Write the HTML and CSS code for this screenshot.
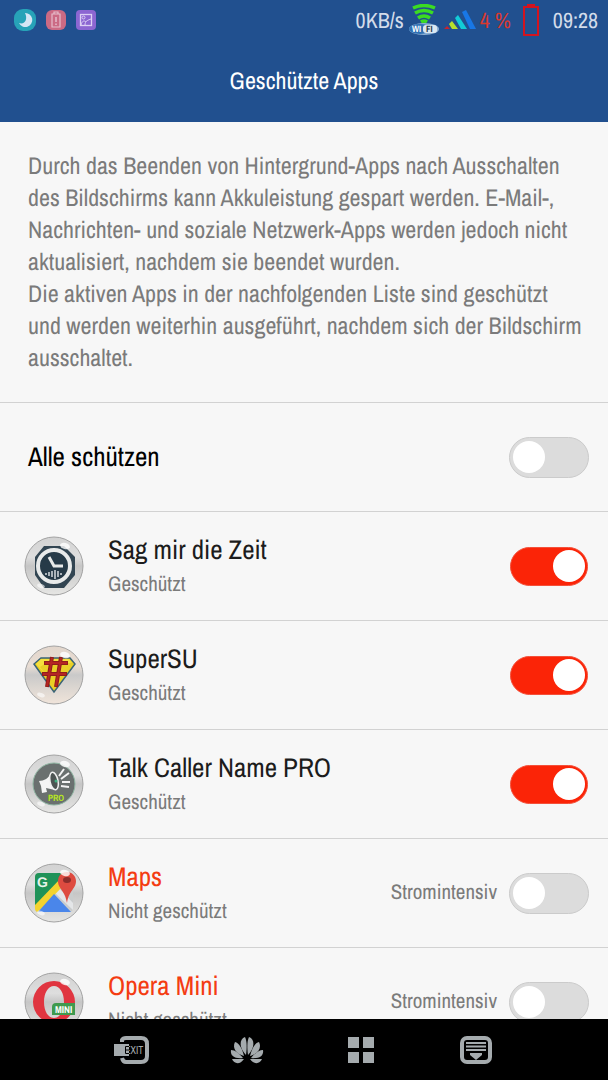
FILE: index.html
```html
<!DOCTYPE html>
<html lang="de">
<head>
    <meta charset="UTF-8">
    <meta name="viewport" content="width=device-width, initial-scale=1.0">
    <title>Geschützte Apps</title>
    <link rel="stylesheet" href="styles.css">
</head>
<body>
    <!-- Shared glass bubble for the app icons -->
    <svg class="defs" width="0" height="0" aria-hidden="true">
        <defs>
            <linearGradient id="glass" x1="0" y1="0" x2="0" y2="1">
                <stop offset="0" stop-color="#d2d2d2"/>
                <stop offset="0.35" stop-color="#dedede"/>
                <stop offset="0.5" stop-color="#c6c6c6"/>
                <stop offset="1" stop-color="#e6e6e4"/>
            </linearGradient>
            <linearGradient id="glass-warm" x1="0" y1="0" x2="0" y2="1">
                <stop offset="0" stop-color="#e2d6cc"/>
                <stop offset="0.35" stop-color="#e8ddd4"/>
                <stop offset="0.5" stop-color="#c9c9c9"/>
                <stop offset="0.7" stop-color="#dad5d0"/>
                <stop offset="1" stop-color="#f0e4da"/>
            </linearGradient>
            <g id="shine">
                <ellipse cx="41" cy="10" rx="5" ry="3" fill="#fff" opacity="0.8" transform="rotate(15 41 10)"/>
                <ellipse cx="17" cy="50" rx="4" ry="2" fill="#fff" opacity="0.6" transform="rotate(20 17 50)"/>
                <circle cx="30" cy="30" r="29" fill="none" stroke="#a3a3a3"/>
            </g>
        </defs>
    </svg>

    <header class="top">
        <div class="status-bar">
            <div class="status-left">
                <svg width="22" height="22" viewBox="0 0 22 22" aria-hidden="true">
                    <rect width="22" height="22" rx="9" fill="#27a3b8"/>
                    <path d="M11 4a7 7 0 1 1-6 10c6 2 9-4 6-10z" fill="#d5e6f5"/>
                </svg>
                <svg width="20" height="20" viewBox="0 0 20 20" aria-hidden="true">
                    <rect width="20" height="20" rx="6" fill="#cb6a84"/>
                    <path d="M8 3.500V2h4v1.500M6 4h8v13H6z" fill="none" stroke="#e6bdcb" stroke-width="1.200"/>
                    <path d="M10 7v5M10 13.500v1.500" stroke="#e6bdcb" stroke-width="1.500"/>
                </svg>
                <svg width="20" height="20" viewBox="0 0 20 20" aria-hidden="true">
                    <rect width="20" height="20" rx="4" fill="#8c66d2"/>
                    <rect x="4.500" y="4.500" width="11" height="11" fill="none" stroke="#dccff5" stroke-width="1.300"/>
                    <circle cx="7.500" cy="7.500" r="1.500" fill="none" stroke="#dccff5"/>
                    <path d="M5 15c1-4 3-5 5-3M9 15c0-4 3-5 6-6" fill="none" stroke="#dccff5"/>
                </svg>
            </div>
            <div class="status-right">
                <span>0KB/s</span>
                <svg width="32" height="32" viewBox="0 0 32 32" aria-hidden="true">
                    <path d="M5 4q11-5 22 0M7 9q9-5 18 0M10 14q6-4 12 0M13 18q3-2 6 0" fill="none" stroke="#3bdc22" stroke-width="3.500"/>
                    <ellipse cx="16" cy="25" rx="15" ry="6" fill="#8fb2d6"/>
                    <ellipse cx="12" cy="25" rx="11" ry="5" fill="#2f70b4"/>
                    <rect x="15" y="21" width="14" height="8" rx="3" fill="#dce8f2"/>
                    <text x="4" y="28" class="wifi-text" fill="#fff">WI</text>
                    <text x="18" y="28" class="wifi-text" fill="#234">FI</text>
                </svg>
                <svg width="32" height="20" viewBox="0 0 32 20" aria-hidden="true">
                    <path d="M0 19l3-3 3 3z" fill="#c8232c"/>
                    <path d="M5 14l3-3 6 8H8z" fill="#b6e02c"/>
                    <path d="M11 8l3-3 9 14h-6z" fill="#12cbd8"/>
                    <path d="M18 2l4-2 10 19h-6z" fill="#1877e6"/>
                </svg>
                <span class="battery-level">4 %</span>
                <svg class="battery" width="16" height="34" viewBox="0 0 16 34" aria-hidden="true">
                    <path d="M1 4h14v28H1zM5 3V2h6v1" fill="none" stroke="#d3141f" stroke-width="2"/>
                </svg>
                <span>09:28</span>
            </div>
        </div>
        <h1>Geschützte Apps</h1>
    </header>

    <main>
        <p class="intro">
            Durch das Beenden von Hintergrund-Apps nach Ausschalten<br>
            des Bildschirms kann Akkuleistung gespart werden. E-Mail-,<br>
            Nachrichten- und soziale Netzwerk-Apps werden jedoch nicht<br>
            aktualisiert, nachdem sie beendet wurden.<br>
            Die aktiven Apps in der nachfolgenden Liste sind geschützt<br>
            und werden weiterhin ausgeführt, nachdem sich der Bildschirm<br>
            ausschaltet.
        </p>

        <div class="row row-all">
            <label class="name" for="all">Alle schützen</label>
            <input class="switch" type="checkbox" id="all">
        </div>

        <div class="row">
            <svg class="app-icon" viewBox="0 0 60 60" aria-hidden="true">
                <circle cx="30" cy="30" r="29" fill="url(#glass)"/>
                <path d="M20 10h20l11 11v18L40 52H20L11 39V21z" fill="#324552"/>
                <circle cx="30" cy="30" r="16" fill="#263a48" stroke="#e8eaea" stroke-width="4"/>
                <path d="M25 21l5 9h9" fill="none" stroke="#e8eaea" stroke-width="3"/>
                <path d="M22 37v2M25 36v4M28 35v6M31 34v9M34 35v6M37 37v2" stroke="#d5dade" stroke-width="1.500"/>
                <use href="#shine"/>
            </svg>
            <label class="info" for="zeit">
                <span class="name">Sag mir die Zeit</span>
                <span class="state">Geschützt</span>
            </label>
            <input class="switch" type="checkbox" id="zeit" checked>
        </div>

        <div class="row">
            <svg class="app-icon" viewBox="0 0 60 60" aria-hidden="true">
                <circle cx="30" cy="30" r="29" fill="url(#glass-warm)"/>
                <path d="M17 13h29l5 6-21 28L10 19z" fill="#e9cf26" stroke="#3b6478" stroke-width="1.500"/>
                <path d="M17 14h28l3 4H22l-6 4 6 8-10-11z" fill="#f6df3c"/>
                <path d="M28 12l-5 30M37 12l-5 30M20 18h24M18 29h25" stroke="#8f1d1c" stroke-width="4"/>
                <path d="M28 13l-5 28M37 13l-5 28M21 18h22M19 29h23" stroke="#b52523" stroke-width="2"/>
                <use href="#shine"/>
            </svg>
            <label class="info" for="supersu">
                <span class="name">SuperSU</span>
                <span class="state">Geschützt</span>
            </label>
            <input class="switch" type="checkbox" id="supersu" checked>
        </div>

        <div class="row">
            <svg class="app-icon" viewBox="0 0 60 60" aria-hidden="true">
                <circle cx="30" cy="30" r="29" fill="url(#glass)"/>
                <circle cx="30" cy="30" r="21" fill="#6a706f" stroke="#8fb5a2"/>
                <path d="M27 19l4 17-9-2 1 4-5 1-1-7-2-5c5 0 10-3 12-8z" fill="#f4f4f4"/>
                <ellipse cx="30" cy="27" rx="4" ry="9" fill="#4d5453" stroke="#f0f0f0" stroke-width="1.500" transform="rotate(-12 30 27)"/>
                <path d="M35 22l5-7M37 25l8-6M38 28h8M37 32l8 1" stroke="#f4f4f4" stroke-width="2"/>
                <circle cx="32" cy="27" r="1.500" fill="#40b080"/>
                <text x="24" y="47" class="pro-text" fill="#b7e81d">PRO</text>
                <use href="#shine"/>
            </svg>
            <label class="info" for="caller">
                <span class="name">Talk Caller Name PRO</span>
                <span class="state">Geschützt</span>
            </label>
            <input class="switch" type="checkbox" id="caller" checked>
        </div>

        <div class="row unprotected">
            <svg class="app-icon" viewBox="0 0 60 60" aria-hidden="true">
                <circle cx="30" cy="30" r="29" fill="url(#glass)"/>
                <rect x="11" y="10" width="38" height="39" rx="4" fill="#c9cccd"/>
                <path d="M15 10h28L11 43V14q0-4 4-4z" fill="#1f9258"/>
                <path d="M34 24l15 16v7L30 29z" fill="#e4e6e8"/>
                <path d="M11 42l27-28 2 8-26 27q-3 0-3-4z" fill="#f3d32f"/>
                <path d="M30 31l17 18H14z" fill="#4a86ea"/>
                <text x="13" y="24" class="g-text" fill="#e6f2ea">G</text>
                <path d="M43 9c-6 0-9 4-9 9 0 8 7 9 9 22 2-13 9-14 9-22 0-5-4-9-9-9z" fill="#de4b40"/>
                <ellipse cx="43" cy="17" rx="4" ry="3" fill="#8c2d2b"/>
                <use href="#shine"/>
            </svg>
            <label class="info" for="maps">
                <span class="name">Maps</span>
                <span class="state">Nicht geschützt</span>
            </label>
            <span class="power">Stromintensiv</span>
            <input class="switch" type="checkbox" id="maps">
        </div>

        <div class="row unprotected">
            <svg class="app-icon" viewBox="0 0 60 60" aria-hidden="true">
                <circle cx="30" cy="30" r="29" fill="url(#glass)"/>
                <path fill-rule="evenodd" d="M30 9a21 21 0 1 1 0 42 21 21 0 0 1 0-42zM30 14c-6 0-10 7-10 16s4 16 10 16 10-7 10-16-4-16-10-16z" fill="#e03540"/>
                <path d="M32 31h19v12H28v-8q0-4 4-4z" fill="#3f9a4e"/>
                <text x="31" y="41" class="mini-text" fill="#fff">MINI</text>
                <use href="#shine"/>
            </svg>
            <label class="info" for="opera">
                <span class="name">Opera Mini</span>
                <span class="state">Nicht geschützt</span>
            </label>
            <span class="power">Stromintensiv</span>
            <input class="switch" type="checkbox" id="opera">
        </div>
    </main>

    <nav class="nav-bar">
        <button type="button" aria-label="Exit">
            <svg width="36" height="28" viewBox="0 0 36 28">
                <path d="M8 6V4q1-2 4-2h15q6 0 6 6v12q0 6-6 6H12q-3 0-4-4" fill="none" stroke="#a5abae" stroke-width="4"/>
                <rect x="0" y="8" width="15" height="12" fill="#a5abae"/>
                <text x="11" y="18" class="exit-text" fill="#a5abae">EXIT</text>
                <path d="M15 10.500h-3.500v7H15M12 14h3" fill="none" stroke="#000"/>
            </svg>
        </button>
        <button type="button" aria-label="Home">
            <svg width="34" height="28" viewBox="0 0 34 28" fill="#a5abae">
                <path d="M16 19C9 12 9 3 15 1c2 4 2 11 1 18z"/>
                <path d="M18 19c7-7 7-16 1-18-2 4-2 11-1 18z"/>
                <path d="M14 20C12 12 9 7 5 6c-3 6 1 12 9 14z"/>
                <path d="M20 20c2-8 5-13 9-14 3 6-1 12-9 14z"/>
                <path d="M13 22C9 17 5 14 1 14c-1 6 4 9 12 8z"/>
                <path d="M21 22c4-5 8-8 12-8 1 6-4 9-12 8z"/>
                <path d="M14 23H2c2 5 8 6 12 0z"/>
                <path d="M20 23h12c-2 5-8 6-12 0z"/>
            </svg>
        </button>
        <button type="button" aria-label="Apps">
            <svg width="28" height="28" viewBox="0 0 28 28" fill="#a5abae">
                <path d="M1 1h11v11H1zM16 1h11v11H16zM1 16h11v11H1zM16 16h11v11H16z"/>
            </svg>
        </button>
        <button type="button" aria-label="Benachrichtigungen">
            <svg width="34" height="28" viewBox="0 0 34 28">
                <rect x="3" y="2" width="28" height="24" rx="5" fill="none" stroke="#a5abae" stroke-width="4"/>
                <path d="M7 7h20M7 10.500h20M7 14h20" stroke="#a5abae" stroke-width="2"/>
                <path d="M11 17h12v2l-6 5-6-5z" fill="#a5abae"/>
            </svg>
        </button>
    </nav>
</body>
</html>
```

FILE: styles.css
```css
* {
    margin: 0;
    padding: 0;
    box-sizing: border-box;
}

body {
    font-family: "Archivo Narrow", "Liberation Sans Narrow", "Liberation Sans", sans-serif;
    text-rendering: geometricPrecision;
    background: #f7f7f7;
    color: #1c1c1c;
    display: flex;
    flex-direction: column;
    height: 100vh;
    overflow: hidden;
}

.defs {
    position: absolute;
}

/* Header */
.top {
    background: #21508f;
    color: #ffffff;
    flex-shrink: 0;
}

.status-bar {
    display: flex;
    justify-content: space-between;
    align-items: center;
    height: 40px;
    padding: 0 10px 0 14px;
    font-size: 22px;
    color: #d3dcea;
}

.status-left,
.status-right {
    display: flex;
    align-items: center;
}

.status-left {
    gap: 10px;
}

.status-right {
    gap: 4px;
}

.battery-level {
    color: #d8392f;
}

.battery {
    margin: 0 10px 0 8px;
}

.top h1 {
    font-size: 24px;
    font-weight: normal;
    line-height: 82px;
    text-align: center;
}

/* App list */
main {
    flex: 1;
    min-height: 0;
    overflow: hidden;
}

.intro {
    padding: 28px;
    font-size: 24px;
    line-height: 32px;
    color: #7b7b7b;
    white-space: nowrap;
}

.row {
    display: flex;
    align-items: center;
    height: 109px;
    padding: 0 19px 0 24px;
    border-top: 1px solid #d2d2d2;
}

.row-all {
    padding-left: 28px;
    justify-content: space-between;
    color: #000000;
}

.app-icon {
    width: 60px;
    height: 60px;
    margin-right: 24px;
}

.info {
    flex: 1;
    display: flex;
    flex-direction: column;
}

.name {
    font-size: 27px;
    line-height: 36px;
}

.state,
.power {
    font-size: 21px;
    line-height: 32px;
    color: #7b7b7b;
}

.unprotected .name {
    color: #f43c12;
}

.power {
    margin-right: 12px;
    padding-bottom: 2px;
}

.switch {
    appearance: none;
    display: flex;
    align-items: center;
    width: 80px;
    height: 41px;
    padding: 0 3px;
    background: #dcdcdc;
    border: 1px solid #cbcbcb;
    border-radius: 21px;
    cursor: pointer;
}

.switch::before {
    content: '';
    width: 32px;
    height: 32px;
    border-radius: 50%;
    background: #ffffff;
}

.switch:checked {
    justify-content: flex-end;
    width: 78px;
    height: 39px;
    margin-right: 1px;
    padding: 0 2px;
    background: #fb2407;
    border-color: #f4503a;
}

/* Navigation bar */
.nav-bar {
    display: flex;
    justify-content: space-between;
    align-items: center;
    flex-shrink: 0;
    height: 61px;
    padding: 0 114px;
    background: #000000;
}

.nav-bar button {
    display: flex;
    justify-content: center;
    width: 36px;
    background: none;
    border: none;
    cursor: pointer;
}

/* Lettering inside the icons */
.wifi-text,
.pro-text {
    font: bold 9px "Archivo Narrow", "Liberation Sans Narrow", sans-serif;
}

.g-text {
    font: bold 14px "Liberation Sans", sans-serif;
}

.mini-text {
    font: bold 10px "Archivo Narrow", "Liberation Sans Narrow", sans-serif;
}

.exit-text {
    font: 10px "Archivo Narrow", "Liberation Sans Narrow", sans-serif;
}
```
